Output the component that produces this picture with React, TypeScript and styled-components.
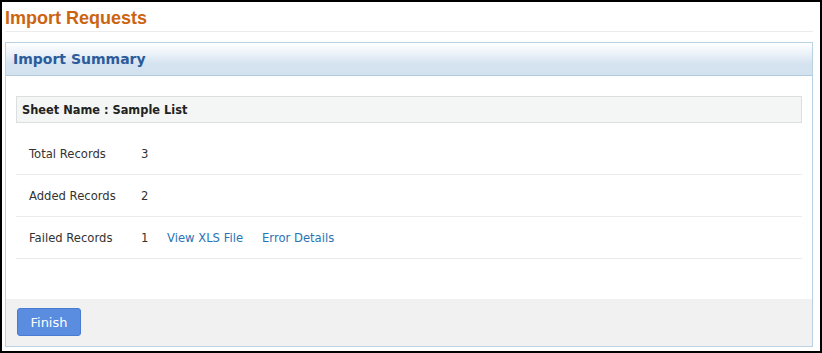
import React from "react";
import styled, { createGlobalStyle } from "styled-components";

const GlobalStyle = createGlobalStyle`
  html, body {
    margin: 0;
    padding: 0;
    background: #fff;
  }
  * {
    box-sizing: border-box;
  }
`;

const Frame = styled.div`
  width: 822px;
  height: 353px;
  border: 2px solid #000;
  padding: 0 7px 0 3px;
  background: #fff;
  font-family: "DejaVu Sans", Verdana, sans-serif;
`;

const PageTitle = styled.h1`
  margin: 0;
  padding: 5px 0 2px 0;
  line-height: 22px;
  font-family: "Liberation Sans", Arial, sans-serif;
  font-size: 18px;
  font-weight: bold;
  color: #cc6410;
  border-bottom: 1px solid #ececec;
`;

const Panel = styled.section`
  margin-top: 10px;
  height: 305px;
  border: 1px solid #b9d2e4;
  display: flex;
  flex-direction: column;
`;

const PanelHeader = styled.div`
  height: 33px;
  padding-left: 7px;
  display: flex;
  align-items: center;
  border-bottom: 1px solid #b3c9dc;
  background: linear-gradient(to bottom, #ffffff 0%, #eaf1f8 35%, #d5e3f0 65%, #d3e2ef 100%);
  font-size: 14px;
  font-weight: bold;
  color: #2b5b9b;
`;

const PanelBody = styled.div`
  flex: 1;
  padding: 20px 10px 0 10px;
`;

const SheetBar = styled.div`
  height: 27px;
  padding-left: 5px;
  display: flex;
  align-items: center;
  border: 1px solid #dcdfdf;
  background: #f4f6f6;
  font-size: 11.4px;
  font-weight: bold;
  color: #222;
`;

const RecordList = styled.div`
  margin-top: 10px;
`;

const RecordRow = styled.div`
  height: 42px;
  padding-left: 13px;
  display: flex;
  align-items: center;
  border-bottom: 1px solid #ececec;
  font-size: 11.6px;
  color: #333;
`;

const Label = styled.span`
  width: 112px;
`;

const Value = styled.span`
  width: 26px;
`;

const FileLink = styled.a<{ $gap?: number }>`
  margin-right: ${(p) => p.$gap ?? 0}px;
  color: #2a73b5;
  text-decoration: none;
  cursor: pointer;
`;

const Footer = styled.div`
  height: 47px;
  padding: 9px 0 0 11px;
  background: #f1f1f1;
`;

const FinishButton = styled.button`
  width: 64px;
  height: 28px;
  padding: 0;
  border: 1px solid #4a7bd2;
  border-radius: 3px;
  background: #5a8ce0;
  color: #fff;
  font-family: "DejaVu Sans", Verdana, sans-serif;
  font-size: 13px;
  cursor: pointer;
`;

const records = [
  { label: "Total Records", value: "3" },
  { label: "Added Records", value: "2" },
  { label: "Failed Records", value: "1", links: true },
];

export default function App() {
  return (
    <>
      <GlobalStyle />
      <Frame>
        <PageTitle>Import Requests</PageTitle>
        <Panel>
          <PanelHeader>Import Summary</PanelHeader>
          <PanelBody>
            <SheetBar>Sheet Name : Sample List</SheetBar>
            <RecordList>
              {records.map((r) => (
                <RecordRow key={r.label}>
                  <Label>{r.label}</Label>
                  <Value>{r.value}</Value>
                  {r.links ? (
                    <>
                      <FileLink $gap={19}>View XLS File</FileLink>
                      <FileLink>Error Details</FileLink>
                    </>
                  ) : null}
                </RecordRow>
              ))}
            </RecordList>
          </PanelBody>
          <Footer>
            <FinishButton>Finish</FinishButton>
          </Footer>
        </Panel>
      </Frame>
    </>
  );
}
